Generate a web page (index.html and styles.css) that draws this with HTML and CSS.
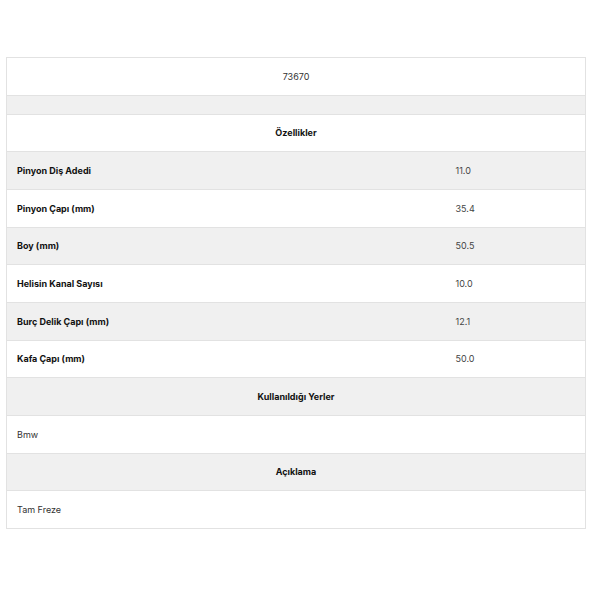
FILE: index.html
```html
<!DOCTYPE html>
<html>
<head>
<meta charset="utf-8">
<link rel="stylesheet" href="styles.css">
</head>
<body>
<table class="spec">
  <tr class="white"><td colspan="2" class="center">73670</td></tr>
  <tr class="gray spacer"><td colspan="2"></td></tr>
  <tr class="white"><th colspan="2">Özellikler</th></tr>
  <tr class="gray"><td class="label">Pinyon Diş Adedi</td><td class="val">11.0</td></tr>
  <tr class="white"><td class="label">Pinyon Çapı (mm)</td><td class="val">35.4</td></tr>
  <tr class="gray"><td class="label">Boy (mm)</td><td class="val">50.5</td></tr>
  <tr class="white"><td class="label">Helisin Kanal Sayısı</td><td class="val">10.0</td></tr>
  <tr class="gray"><td class="label">Burç Delik Çapı (mm)</td><td class="val">12.1</td></tr>
  <tr class="white"><td class="label">Kafa Çapı (mm)</td><td class="val">50.0</td></tr>
  <tr class="gray"><th colspan="2">Kullanıldığı Yerler</th></tr>
  <tr class="white"><td colspan="2">Bmw</td></tr>
  <tr class="gray"><th colspan="2">Açıklama</th></tr>
  <tr class="white"><td colspan="2">Tam Freze</td></tr>
</table>
</body>
</html>
```
FILE: styles.css
```css
html, body {
  margin: 0;
  padding: 0;
  background: #fff;
}
body {
  padding: 57px 6px 0 6px;
  font-family: Inter, "Noto Sans", sans-serif;
  font-size: 9px;
  color: #333;
}
.spec {
  width: 580px;
  border-collapse: collapse;
  border: 1px solid #e2e2e2;
}
.spec td, .spec th {
  height: 37.67px;
  padding: 0 10px;
  box-sizing: border-box;
  border-top: 1px solid #e2e2e2;
  text-align: left;
  vertical-align: middle;
}
.spec th {
  text-align: center;
  font-weight: 700;
  color: #111;
}
.spec .center { text-align: center; }
.spec .label {
  width: 439px;
  font-weight: 700;
  color: #111;
}
.spec .val { color: #444; }
.spec .spacer td { height: 19px; }
.white { background: #fff; }
.gray { background: #f0f0f0; }
```
